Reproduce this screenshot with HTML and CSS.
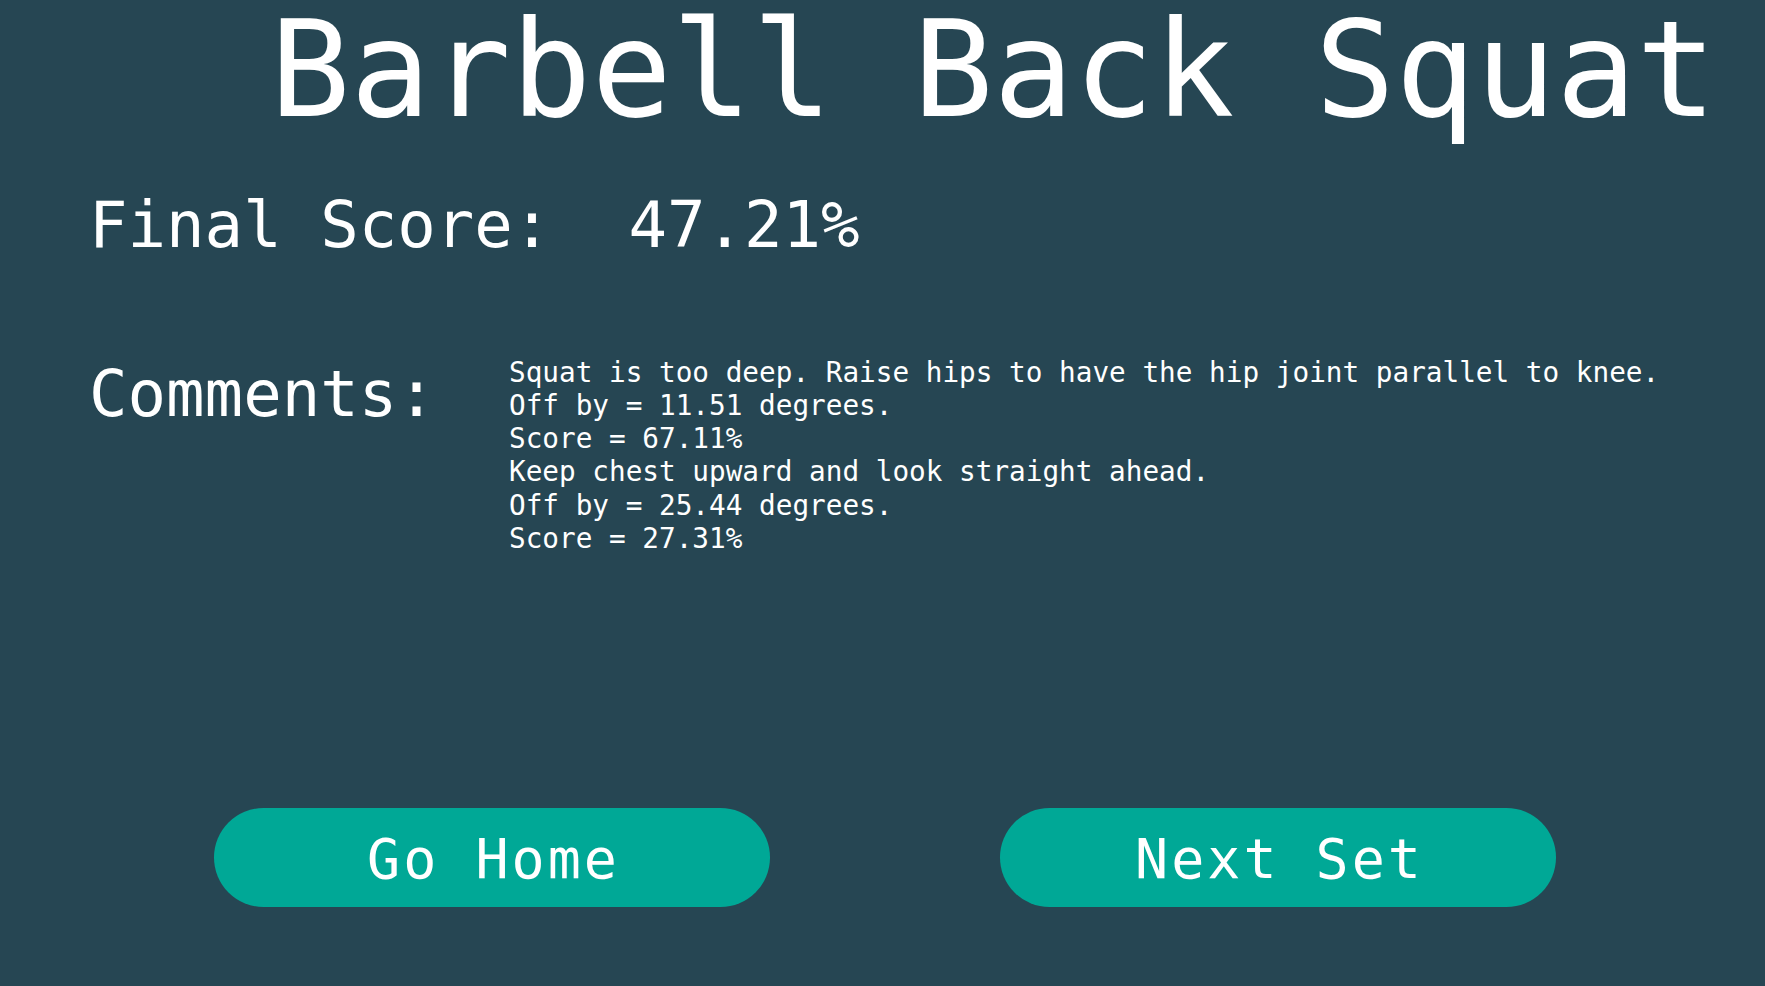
FILE: index.html
```html
<!DOCTYPE html>
<html lang="en">
<head>
<meta charset="utf-8">
<title>Barbell Back Squat</title>
<link rel="stylesheet" href="styles.css">
</head>
<body>
<div class="screen">
  <h1 class="title">Barbell Back Squat</h1>
  <div class="score">Final Score:  47.21%</div>
  <div class="comments">
    <div class="comments-label">Comments:</div>
    <div class="comments-text">
      <div class="line">Squat is too deep. Raise hips to have the hip joint parallel to knee.</div>
      <div class="line">Off by = 11.51 degrees.</div>
      <div class="line">Score = 67.11%</div>
      <div class="line">Keep chest upward and look straight ahead.</div>
      <div class="line">Off by = 25.44 degrees.</div>
      <div class="line">Score = 27.31%</div>
    </div>
  </div>
  <div class="actions">
    <button class="btn">Go Home</button>
    <button class="btn">Next Set</button>
  </div>
</div>
</body>
</html>
```
FILE: styles.css
```css
html, body {
  margin: 0;
  padding: 0;
  background: #264653;
}
body {
  width: 1765px;
  height: 986px;
  overflow: hidden;
  color: #ffffff;
  font-family: "DejaVu Sans Mono", "Liberation Mono", monospace;
}
.screen {
  display: flex;
  flex-direction: column;
}
.title {
  margin: 0;
  padding: 3px 0 0 270px;
  font-size: 133.5px;
  font-weight: normal;
  line-height: 1;
  white-space: pre;
}
.score {
  margin-top: 56px;
  padding-left: 89px;
  font-size: 64px;
  line-height: 1;
  white-space: pre;
}
.comments {
  margin-top: 99px;
  padding-left: 89px;
  display: flex;
  align-items: flex-start;
}
.comments-label {
  width: 420px;
  flex: none;
  margin-top: 6px;
  font-size: 64px;
  line-height: 1;
}
.comments-text {
  font-size: 27.7px;
  line-height: 33.3px;
}
.line {
  white-space: pre;
}
.actions {
  margin-top: 253px;
  padding-left: 214px;
  display: flex;
  gap: 230px;
}
.btn {
  width: 556px;
  height: 99px;
  border: none;
  border-radius: 50px;
  background: #00a896;
  color: #ffffff;
  font-family: "DejaVu Sans Mono", "Liberation Mono", monospace;
  font-size: 55px;
  letter-spacing: 3px;
  line-height: 1;
  padding: 3px 0 0 3px;
  display: flex;
  align-items: center;
  justify-content: center;
}
```
